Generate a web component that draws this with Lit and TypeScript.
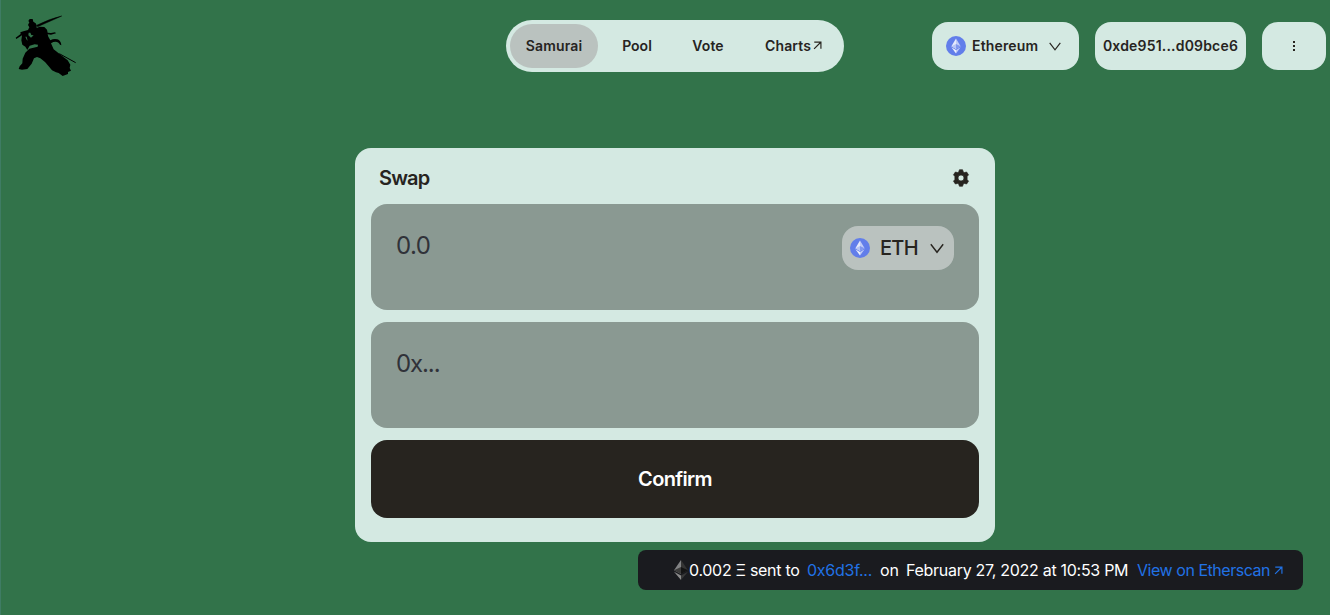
import { LitElement, html, css, svg } from "lit";
import { customElement, property } from "lit/decorators.js";

const samurai = svg`
  <g fill="#000" stroke-linejoin="round">
    <path d="M110 76 Q150 56 185 48 Q154 62 113 80Z" stroke="#000" stroke-width="1.5"/>
    <path d="M47 113 L62 102 L61 97 L70 94 L84 90 L88 82 L84 75 L88 67 L85 63 L89 57 L98 57 L100 65 L107 70 L110 76 L110 84 L119 80 L133 81 L141 89 L143 98 L153 99 L165 97 L168 100 L153 104 L143 103 L145 110 L151 121 Q161 115 172 118 Q183 122 184 136 L180 134 Q174 122 160 126 L153 130 L161 148 L178 161 L203 181 L211 194 L209 204 L213 212 L204 216 L204 222 L194 226 L188 228 L176 219 L168 217 L156 211 L146 199 L135 186 L121 175 L111 171 L102 175 L95 191 L82 207 L66 209 L56 207 L59 199 L67 190 L68 176 L76 158 L88 146 L113 140 L114 134 L104 133 L89 137 L82 150 L76 140 L67 134 L64 121 L66 106 L49 117Z"/>
  </g>
  <path d="M86 98 L91 98 L94 105 L101 106 L93 113 L85 106Z M76 110 L80 119 L83 122 L80 110Z" fill="#32734a"/>
  <path d="M178 161 L227 188" stroke="#000" stroke-width="3"/>`;

const ethBadge = html`<svg class="coin" viewBox="0 0 20 20">
  <circle cx="10" cy="10" r="10" fill="#627eea"/>
  <path d="M10 2.5 5.4 10.2 10 13Z" fill="#e6eafc"/>
  <path d="M10 2.5 14.6 10.2 10 13Z" fill="#c1ccf7"/>
  <path d="M5.4 10.2 10 8.1V13Z" fill="#b8c5f5"/>
  <path d="M14.6 10.2 10 8.1V13Z" fill="#8197ee"/>
  <path d="M5.4 11.3 10 17.5V14Z" fill="#eef1fd"/>
  <path d="M14.6 11.3 10 17.5V14Z" fill="#c1ccf7"/>
</svg>`;

const arrow = html`<svg class="arrow" viewBox="0 0 10 10" fill="none" stroke="currentColor" stroke-width="1.3">
  <path d="M1.4 1.2H8.8V8.6M8.6 1.4 1.2 8.8"/>
</svg>`;

const chevron = html`<svg class="chevron" viewBox="0 0 14 10" fill="none" stroke="currentColor">
  <path d="M.8 .8 7 8.8 13.2 .8"/>
</svg>`;

@customElement("swap-field")
class SwapField extends LitElement {
  @property() hint = "";
  static styles = css`
    :host { display: flex; justify-content: space-between; align-items: flex-start; box-sizing: border-box; height: 106px; padding: 22px 25px; border-radius: 16px; background: #8a9992; }
    .hint { font-size: 24px; line-height: 40px; color: #303239; letter-spacing: -0.5px; }
    :host([hint^="0x"]) .hint { letter-spacing: -1.1px; }
  `;
  render() {
    return html`<span class="hint">${this.hint}</span><slot></slot>`;
  }
}

@customElement("app-root")
class AppRoot extends LitElement {
  static styles = css`
    :host { display: block; position: relative; box-sizing: border-box; height: 615px; overflow: hidden; background: #32734a; border-left: 1px solid #3f7c64; font-family: Inter, "Liberation Sans", sans-serif; color: #27241f; }
    * { box-sizing: border-box; }
    svg { display: block; flex: none; }
    header { display: grid; grid-template-columns: 505px 338px 1fr; height: 148px; align-items: start; }
    .logo { width: 100px; height: 90px; margin-left: -1px; }
    nav { display: flex; gap: 8px; margin-top: 20px; height: 52px; padding: 4px; border-radius: 26px; background: #d4e9e2; }
    .tab { display: flex; align-items: center; justify-content: center; gap: 2px; height: 44px; padding-bottom: 1px; border-radius: 22px; font-size: 14px; font-weight: 600; white-space: nowrap; }
    .samurai { width: 88px; background: #bac2bf; letter-spacing: 0.15px; }
    .pool { width: 62px; }
    .vote { width: 64px; letter-spacing: 0.1px; }
    .charts { width: 91px; letter-spacing: 0.1px; }
    .arrow { width: 9px; height: 9px; }
    .account { display: flex; justify-content: flex-end; gap: 16px; margin-top: 22px; padding-right: 4px; }
    .pill { display: flex; align-items: center; height: 48px; border-radius: 16px; background: #d4e9e2; font-size: 14px; font-weight: 600; white-space: nowrap; }
    .pill > span { padding-bottom: 1px; }
    .network { width: 147px; padding: 0 0 0 14px; letter-spacing: 0.15px; }
    .network .name { width: 67px; margin: 0 9px 0 6px; }
    .coin { width: 20px; height: 20px; }
    .network .chevron { width: 12px; height: 9px; margin-left: 1px; stroke-width: 1.4; }
    .address { width: 151px; justify-content: center; letter-spacing: 0.18px; }
    .more { width: 64px; justify-content: center; }
    .dots { width: 4px; height: 12px; }
    main { width: 640px; height: 394px; margin-left: 354px; padding: 16px; border-radius: 16px; background: #d4e9e2; display: flex; flex-direction: column; gap: 12px; }
    .title { display: flex; align-items: center; justify-content: space-between; height: 28px; padding: 0 9px 0 8px; font-size: 20px; font-weight: 600; letter-spacing: -0.85px; }
    .gear { width: 18px; height: 18px; }
    .token { display: flex; align-items: center; width: 112px; height: 44px; padding: 0 8px; border-radius: 16px; background: #bac2bf; font-size: 20px; font-weight: 500; }
    .token .symbol { width: 40px; margin: 0 10px 0 10px; letter-spacing: -0.7px; }
    .token .chevron { width: 14px; height: 11px; stroke-width: 1.4; }
    .confirm { display: flex; align-items: center; justify-content: center; height: 78px; border-radius: 16px; background: #27241f; color: #fff; font-size: 20px; font-weight: 600; letter-spacing: -0.65px; }
    .toast { display: flex; align-items: center; width: 665px; height: 40px; margin: 8px 0 0 637px; padding-left: 35px; border-radius: 8px; background: #1a1b1f; color: #fff; font-size: 16px; white-space: nowrap; }
    .toast span { flex: none; }
    .diamond { width: 16px; height: 20px; }
    .amount { width: 118px; letter-spacing: -0.3px; }
    .to { width: 73px; letter-spacing: -0.25px; }
    .on { width: 26px; letter-spacing: -0.2px; }
    .date { width: 231px; letter-spacing: -0.29px; }
    .link { color: #2172e5; }
    .scan { width: 137px; letter-spacing: -0.46px; }
  `;

  render() {
    return html`
      <header>
        <svg class="logo" viewBox="0 0 300 270">${samurai}</svg>
        <nav>
          <span class="tab samurai">Samurai</span>
          <span class="tab pool">Pool</span>
          <span class="tab vote">Vote</span>
          <span class="tab charts"><span>Charts</span>${arrow}</span>
        </nav>
        <div class="account">
          <div class="pill network">${ethBadge}<span class="name">Ethereum</span>${chevron}</div>
          <div class="pill address"><span>0xde951...d09bce6</span></div>
          <div class="pill more"><svg class="dots" viewBox="0 0 4 12"><path d="M1 1h2v2H1zM1 5h2v2H1zM1 9h2v2H1z" fill="#27241f"/></svg></div>
        </div>
      </header>
      <main>
        <div class="title">
          <span>Swap</span>
          <svg class="gear" viewBox="0 0 18 18">
            <path fill="#27241f" fill-rule="evenodd" d="M7.4 .8h3.2l.6 2.1 1.2.7 2.2-.6 1.9 2.8-1.4 1.8v2.8l1.4 1.8-1.9 2.8-2.2-.6-1.2.7-.6 2.1H7.4l-.6-2.1-1.2-.7-2.2.6-1.9-2.8 1.4-1.8V7.6L1.5 5.8 3.4 3l2.2.6 1.2-.7zM9 6a3 3 0 1 0 0 6a3 3 0 0 0 0-6z" stroke="#27241f" stroke-width=".7" stroke-linejoin="round"/>
          </svg>
        </div>
        <swap-field hint="0.0">
          <div class="token">${ethBadge}<span class="symbol">ETH</span>${chevron}</div>
        </swap-field>
        <swap-field hint="0x..."></swap-field>
        <div class="confirm"><span>Confirm</span></div>
      </main>
      <div class="toast">
        <svg class="diamond" viewBox="0 0 16 20">
          <path d="M8 0 1 10.2 8 14Z" fill="#828384"/><path d="M8 0 15 10.2 8 14Z" fill="#343434"/>
          <path d="M1 10.2 8 7V14Z" fill="#3c3c3b"/><path d="M15 10.2 8 7V14Z" fill="#141414"/>
          <path d="M1 11.8 8 20V15.6Z" fill="#8c8c8c"/><path d="M15 11.8 8 20V15.6Z" fill="#393939"/>
        </svg>
        <span class="amount">0.002 Ξ sent to</span>
        <span class="to link">0x6d3f...</span>
        <span class="on">on</span>
        <span class="date">February 27, 2022 at 10:53 PM</span>
        <span class="scan link">View on Etherscan</span>
        <span class="link">${arrow}</span>
      </div>
    `;
  }
}
